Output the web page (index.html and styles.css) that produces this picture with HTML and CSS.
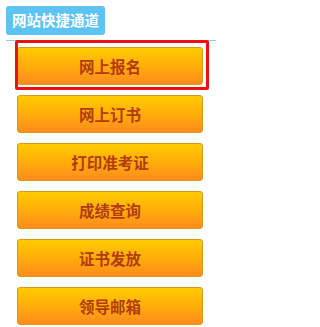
FILE: index.html
```html
<!DOCTYPE html>
<html lang="zh-CN">
<head>
<meta charset="utf-8">
<link rel="stylesheet" href="styles.css">
</head>
<body>
<div class="panel">
  <div class="head"><span class="title">网站快捷通道</span></div>
  <div class="rule"></div>
  <ul class="links">
    <li><a class="btn" href="#">网上报名</a></li>
    <li><a class="btn" href="#">网上订书</a></li>
    <li><a class="btn" href="#">打印准考证</a></li>
    <li><a class="btn" href="#">成绩查询</a></li>
    <li><a class="btn" href="#">证书发放</a></li>
    <li><a class="btn" href="#">领导邮箱</a></li>
  </ul>
  <div class="highlight"></div>
</div>
</body>
</html>
```
FILE: styles.css
```css
html, body {
  margin: 0;
  padding: 0;
  background: #ffffff;
}
body {
  font-family: "Noto Sans CJK SC", "Liberation Sans", sans-serif;
}
.panel {
  position: relative;
  width: 226px;
  height: 327px;
}
.head {
  padding: 6px 0 0 6px;
  display: flex;
}
.title {
  display: block;
  width: 99px;
  height: 29px;
  box-sizing: border-box;
  background: #5cc3f3;
  border-radius: 3px;
  color: #ffffff;
  font-size: 14.5px;
  font-weight: bold;
  line-height: 28px;
  text-align: center;
  letter-spacing: 0;
}
.rule {
  margin: 5px 0 0 6px;
  width: 210px;
  height: 1px;
  background: #8ccbe8;
}
.links {
  list-style: none;
  margin: 0;
  padding: 6px 0 0 17px;
  display: flex;
  flex-direction: column;
  gap: 10px;
}
.btn {
  display: block;
  width: 186px;
  height: 38px;
  box-sizing: border-box;
  border: 1px solid #d39a1c;
  border-radius: 3px;
  background: linear-gradient(to bottom, #ffcb00 0%, #ffad0a 50%, #ff8c1e 100%);
  color: #b23c0c;
  font-size: 15.5px;
  font-weight: bold;
  line-height: 36px;
  text-align: center;
  text-decoration: none;
}
.highlight {
  position: absolute;
  left: 15px;
  top: 40px;
  width: 194px;
  height: 50px;
  box-sizing: border-box;
  border: 3px solid #ee1010;
  border-radius: 2px;
}
```
